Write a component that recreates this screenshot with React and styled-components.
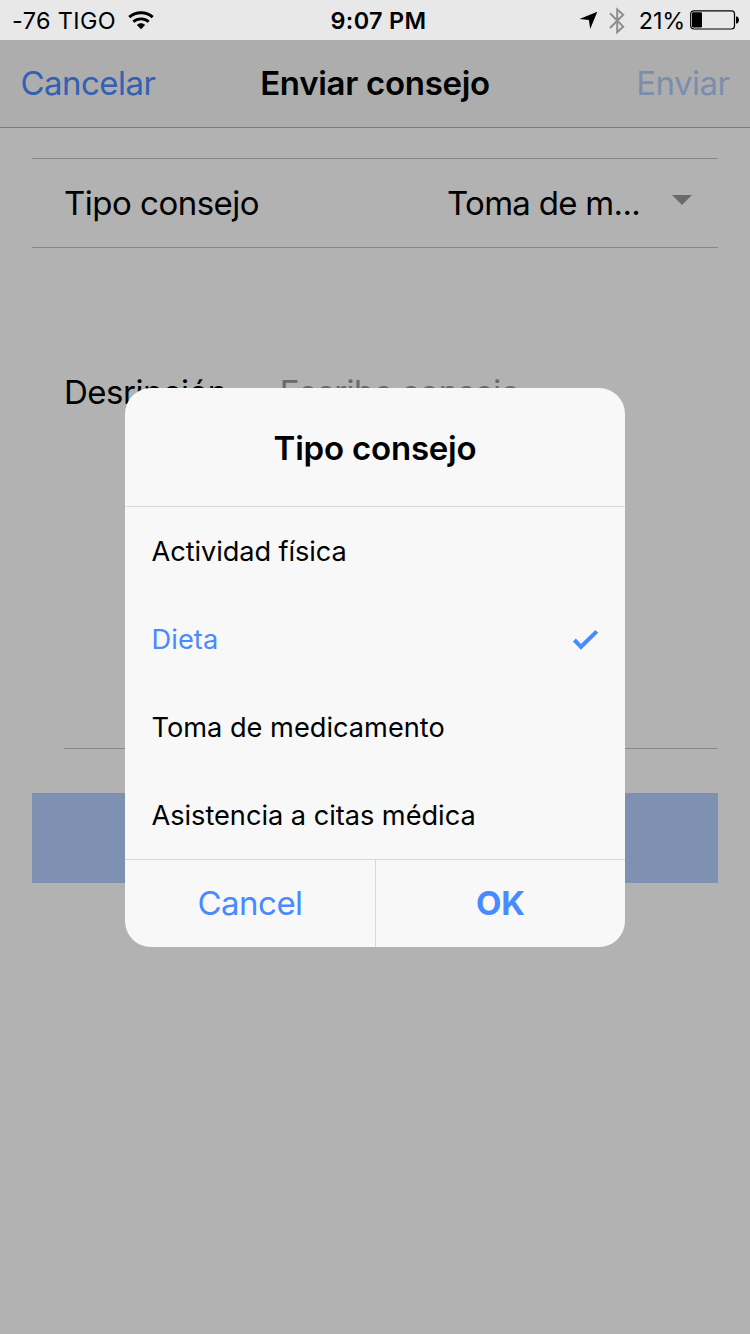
import React from "react";
import styled, { createGlobalStyle } from "styled-components";

const GlobalStyle = createGlobalStyle`
  * { box-sizing: border-box; }
  html, body { margin: 0; padding: 0; background: #fff; }
  body { font-family: Inter, Roboto, "Liberation Sans", sans-serif; color: #000; }
  button { font: inherit; color: inherit; background: none; border: 0; padding: 0; margin: 0; }
`;

const Screen = styled.div`
  width: 750px;
  height: 1334px;
  display: flex;
  flex-direction: column;
  overflow: hidden;
  position: relative;
`;

/* Single line of text; $track is the letter spacing in px. */
const Text = styled.span`
  font-size: ${(p) => p.$size || 33}px;
  font-weight: ${(p) => p.$weight || 400};
  letter-spacing: ${(p) => p.$track || 0}px;
  line-height: 1.2;
  white-space: nowrap;
`;

const StatusBar = styled.div`
  height: 40px;
  flex: none;
  display: grid;
  grid-template-columns: 1fr auto 1fr;
  align-items: center;
  padding: 2px 11px 0 12px;
  background: #e8e8e8;
`;

const StatusLeft = styled.div`
  display: flex;
  align-items: center;
  gap: 12px;
`;

const Clock = styled.div`
  display: flex;
  padding-left: 6px;
`;

const StatusRight = styled.div`
  display: flex;
  align-items: center;
  justify-content: flex-end;
`;

const BluetoothSlot = styled.span`
  display: flex;
  margin: 0 14px 0 11px;
`;

const BatterySlot = styled.span`
  display: flex;
  margin: 0 0 1px 5px;
`;

const NavBar = styled.header`
  height: 88px;
  flex: none;
  display: grid;
  grid-template-columns: 1fr auto 1fr;
  align-items: center;
  padding: 0 20.5px;
  background: #f8f8f8;
  border-bottom: 1px solid #b2b2b2;
`;

const NavButton = styled.button`
  justify-self: ${(p) => (p.$end ? "end" : "start")};
  color: #488aff;
  opacity: ${(p) => (p.disabled ? 0.4 : 1)};
`;

const Content = styled.main`
  flex: 1;
  padding: 30px 32px 0;
  background: #fff;
`;

const SelectRow = styled.div`
  height: 90px;
  display: flex;
  align-items: center;
  justify-content: space-between;
  padding: 2px 26px 0 32px;
  border-top: 1px solid #c0c1c5;
  border-bottom: 1px solid #c0c1c5;
`;

const SelectValue = styled.div`
  display: flex;
  align-items: center;
  gap: 32px;
`;

const Caret = styled.i`
  width: 0;
  height: 0;
  margin-top: -9px;
  border: 10px solid transparent;
  border-top-color: #999;
  border-bottom: 0;
`;

const DescriptionRow = styled.div`
  height: 377px;
  margin: 124px 0 0 32px;
  padding-top: 1px;
  display: flex;
  align-items: flex-start;
  gap: 53px;
  border-bottom: 1px solid #c4c4c4;
`;

const Placeholder = styled(Text)`
  color: #999;
`;

const SubmitBar = styled.div`
  height: 90px;
  margin-top: 44px;
  background: #488aff;
  opacity: 0.4;
`;

const Overlay = styled.div`
  position: absolute;
  inset: 40px 0 0;
  display: flex;
  justify-content: center;
  align-items: flex-start;
  padding-top: 348px;
  background: rgba(0, 0, 0, 0.3);
`;

const Dialog = styled.section`
  width: 500px;
  height: 559px;
  display: flex;
  flex-direction: column;
  overflow: hidden;
  border-radius: 26px;
  background: #f8f8f8;
`;

const DialogHeader = styled.div`
  height: 119px;
  flex: none;
  display: flex;
  align-items: center;
  justify-content: center;
  padding-top: 3px;
  border-bottom: 1px solid #d8d9db;
`;

const Option = styled.div`
  height: 88px;
  flex: none;
  display: flex;
  align-items: center;
  justify-content: space-between;
  padding: 2px 26.5px 0 26.5px;
  color: ${(p) => (p.$selected ? "#488aff" : "#000")};
`;

const DialogActions = styled.div`
  flex: 1;
  display: grid;
  grid-template-columns: 250px 250px;
  border-top: 1px solid #d8d9db;
`;

const DialogButton = styled.button`
  color: #488aff;
  & + & { border-left: 1px solid #d8d9db; }
`;

const WifiIcon = () => (
  <svg width="26" height="20" viewBox="0 0 26 20" fill="none" stroke="#000">
    <path d="M1.3 6.2C7.6 .4 18.4 .4 24.7 6.2" strokeWidth="3" />
    <path d="M5.3 10.7C9.6 6.8 16.4 6.8 20.7 10.7" strokeWidth="2.8" />
    <path d="M13 18.2 8.9 14C11.2 11.8 14.8 11.8 17.1 14Z" fill="#000" stroke="none" />
  </svg>
);

const LocationIcon = () => (
  <svg width="19" height="19" viewBox="0 0 19 19">
    <path d="M18.3 .8 11.2 18 9.9 8.9 .5 7.9Z" fill="#000" />
  </svg>
);

const BluetoothIcon = () => (
  <svg width="16" height="28" viewBox="0 0 16 28" fill="none" stroke="#8e8e8e" strokeWidth="2">
    <path d="M1 6.3 14.2 19.6 8.2 25.2V2.4L14.2 7.8 1 21" />
  </svg>
);

const BatteryIcon = () => (
  <svg width="49" height="20" viewBox="0 0 49 20">
    <rect x=".7" y=".8" width="43.8" height="18.2" rx="3" fill="none" stroke="#000" strokeWidth="1.2" />
    <rect x="2" y="2.3" width="10" height="15.2" rx="1.2" fill="#000" />
    <path d="M46 6.5H47C49.6 7.5 49.6 12.5 47 13.5H46Z" fill="#000" />
  </svg>
);

const CheckIcon = () => (
  <svg width="27" height="22" viewBox="0 0 27 22" fill="none" stroke="#488aff" strokeWidth="4">
    <path d="M2.4 11 9 17.8 24.8 2.4" />
  </svg>
);

const options = [
  { label: "Actividad física", track: -0.08 },
  { label: "Dieta", track: 0.1 },
  { label: "Toma de medicamento", track: 0 },
  { label: "Asistencia a citas médica", track: -0.03 },
];

export default function App() {
  const selected = "Dieta";
  return (
    <Screen>
      <GlobalStyle />
      <StatusBar>
        <StatusLeft>
          <Text $size={23.4} $track={0.4}>-76 TIGO</Text>
          <WifiIcon />
        </StatusLeft>
        <Clock><Text $size={23.4} $weight={600} $track={0.35}>9:07 PM</Text></Clock>
        <StatusRight>
          <LocationIcon />
          <BluetoothSlot><BluetoothIcon /></BluetoothSlot>
          <Text $size={23.4} $track={-0.2}>21%</Text>
          <BatterySlot><BatteryIcon /></BatterySlot>
        </StatusRight>
      </StatusBar>
      <NavBar>
        <NavButton><Text $track={-0.55}>Cancelar</Text></NavButton>
        <Text $weight={600} $track={-0.3}>Enviar consejo</Text>
        <NavButton $end disabled><Text $track={-0.5}>Enviar</Text></NavButton>
      </NavBar>
      <Content>
        <SelectRow>
          <Text $track={-0.5}>Tipo consejo</Text>
          <SelectValue>
            <Text $track={-0.7}>Toma de m...</Text>
            <Caret />
          </SelectValue>
        </SelectRow>
        <DescriptionRow>
          <Text $track={-0.5}>Desripción</Text>
          <Placeholder $track={-0.55}>Escribe consejo</Placeholder>
        </DescriptionRow>
        <SubmitBar />
      </Content>
      <Overlay>
        <Dialog role="dialog">
          <DialogHeader><Text $weight={600} $track={-0.2}>Tipo consejo</Text></DialogHeader>
          {options.map(({ label, track }) => (
            <Option key={label} $selected={label === selected}>
              <Text $size={27.2} $track={track}>{label}</Text>
              {label === selected && <CheckIcon />}
            </Option>
          ))}
          <DialogActions>
            <DialogButton><Text $track={-0.5}>Cancel</Text></DialogButton>
            <DialogButton><Text $weight={700}>OK</Text></DialogButton>
          </DialogActions>
        </Dialog>
      </Overlay>
    </Screen>
  );
}
